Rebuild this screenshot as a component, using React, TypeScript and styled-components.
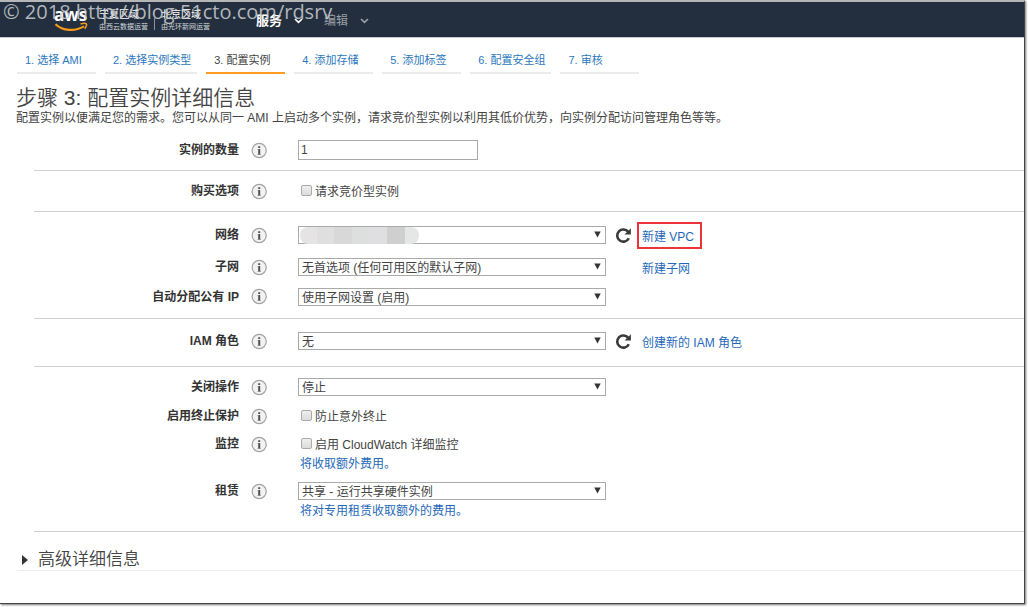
import React from "react";
import styled, { createGlobalStyle } from "styled-components";

const sans = `"Liberation Sans", "Noto Sans CJK SC", sans-serif`;

const GlobalStyle = createGlobalStyle`
  *, *::before, *::after { box-sizing: border-box; }
  body {
    margin: 0;
    background: #fff;
    color: #444;
    font: 12px/16px ${sans};
  }
  button, input, select { font: inherit; color: inherit; margin: 0; }
  a { text-decoration: none; }
`;

const Window = styled.div`
  position: relative;
  min-height: calc(100vh - 3px);
  margin: 0 3px 3px 0;
  border-top: 2px solid #b4b6b8;
  border-right: 1px solid #444;
  border-bottom: 1px solid #444;
  box-shadow: 1px 1px 2px #777;
`;

const TopBar = styled.header`
  display: flex;
  align-items: flex-start;
  height: 36px;
  padding: 5px 0 0 54px;
  background: #232f3e;
  border-bottom: 1px solid #c5cad0;
  color: #fff;
`;

const Logo = styled.a`
  display: flex;
  flex-direction: column;
  width: 35px;
  color: #fff;
  font: 700 17px/15px "Open Sans", sans-serif;

  svg { display: block; }
`;

const Region = styled.div`
  display: flex;
  flex-direction: column;
  gap: 3px;
  margin: 3px 0 0 10px;
  font-size: 10px;
  line-height: 10px;

  small { font-size: 7px; line-height: 8px; color: #d5d8dc; }
`;

const RegionDivider = styled.span`
  width: 1px;
  height: 12px;
  margin: 11px -4px 0 6px;
  background: #8b929b;
`;

const Menus = styled.nav`
  display: flex;
  gap: 21px;
  margin: 5px 0 0 46px;
`;

const MenuButton = styled.button<{ $muted?: boolean }>`
  display: flex;
  align-items: center;
  gap: 12px;
  padding: 0;
  border: 0;
  background: none;
  color: ${(p) => (p.$muted ? "#999fa6" : "#fff")};
  font-size: ${(p) => (p.$muted ? 12 : 13)}px;
  font-weight: ${(p) => (p.$muted ? 400 : 700)};
  line-height: 18px;
`;

const Watermark = styled.div`
  position: absolute;
  top: 0;
  left: 3px;
  color: rgba(205, 208, 212, 0.85);
  font: 20px/20px "Open Sans", sans-serif;
  white-space: nowrap;
  pointer-events: none;
`;

const Steps = styled.nav`
  display: flex;
  gap: 9px;
  padding: 12px 17px 0;
`;

const Step = styled.a<{ $active?: boolean }>`
  min-width: 79px;
  height: 24px;
  padding: 2px 6px 0 8px;
  border-bottom: 2px solid ${(p) => (p.$active ? "#ff9d22" : "#ebebeb")};
  color: ${(p) => (p.$active ? "#444" : "#2b78bd")};
  font-size: 11px;
  white-space: nowrap;
`;

const Intro = styled.div`
  padding: 12px 16px 4px;

  h1 { margin: 0; font-size: 21px; font-weight: 350; line-height: 24px; }
  p { margin: 0; }
`;

const Section = styled.section<{ $top?: number; $bottom?: number }>`
  margin-left: 34px;
  padding: ${(p) => p.$top ?? 0}px 0 ${(p) => p.$bottom ?? 0}px;
  border-bottom: 1px solid #d0d0d0;
`;

const RowGrid = styled.div<{ $height: number }>`
  display: grid;
  grid-template-columns: 205px 35px 1fr;
  grid-template-rows: ${(p) => p.$height}px;
  column-gap: 12px;
  align-items: center;
`;

const RowLabel = styled.label`
  color: #333;
  font-weight: 700;
  text-align: right;
`;

const InfoButton = styled.button`
  display: block;
  width: 17px;
  padding: 0;
  border: 0;
  background: none;

  svg { display: block; }
`;

const Controls = styled.div`
  display: flex;
  align-items: center;
  gap: 9px;
`;

const Hint = styled.p`
  grid-column: 3;
  margin: 0 0 7px;
  padding-left: 2px;
  color: #1f69b8;
  line-height: 12px;
`;

const TextInput = styled.input`
  width: 180px;
  height: 20px;
  padding: 0 2px;
  border: 1px solid #aaa;
  background: #fff;
`;

const SelectBox = styled.div`
  position: relative;
  width: 308px;
  height: 18px;

  select {
    display: block;
    width: 100%;
    height: 100%;
    padding: 2px 20px 0 3px;
    border: 1px solid #aaa;
    border-radius: 0;
    background: #fff;
    line-height: 15px;
    appearance: none;
  }

  > svg { position: absolute; top: 5px; right: 5px; pointer-events: none; }
`;

const Redaction = styled.span`
  position: absolute;
  top: 1px;
  left: 2px;
  width: 119px;
  height: 17px;
  border-radius: 8px;
  background: linear-gradient(
    90deg,
    #e6e3e4 0 17px, #dfdfdf 17px 34px, #d8d8d9 34px 52px, #dcdfde 52px 69px,
    #dfdfe1 69px 87px, #cfcfd0 87px 105px, #e4e7e5 105px
  );
`;

const RefreshSlot = styled.span`
  width: 17px;
  height: 17px;
`;

const RefreshButton = styled.button`
  display: block;
  width: 17px;
  height: 17px;
  padding: 0;
  border: 0;
  background: none;

  svg { display: block; }
`;

const ActionLink = styled.a<{ $marked?: boolean }>`
  padding: 3px 4px 0 1px;
  color: #1f69b8;
  outline: ${(p) => (p.$marked ? "2px solid #ee3338" : "none")};
  outline-offset: 2px;
`;

const Check = styled.label`
  display: flex;
  align-items: center;
  gap: 3px;
  padding-left: 3px;

  input {
    width: 11px;
    height: 11px;
    margin-bottom: 2px;
    border: 1px solid #aaa;
    border-radius: 2px;
    background: linear-gradient(#eee, #dcdcdc);
    appearance: none;
  }
  span { padding-top: 2px; }
`;

const Advanced = styled.div`
  margin-left: 17px;
  padding-top: 18px;
  border-bottom: 1px solid #ececec;

  button {
    display: flex;
    align-items: center;
    gap: 10px;
    padding: 0 0 0 5px;
    border: 0;
    background: none;
    font-size: 17px;
    font-weight: 350;
    line-height: 20px;
  }
`;

const Smile = () => (
  <svg width="35" height="10" viewBox="0 0 35 10" fill="none" stroke="#f79a1c" aria-hidden="true">
    <path d="M1.5 2.2C9 9.2 21 9.6 30 4.4" strokeWidth="2.2" />
    <path d="M26.5 2.1C29 1.3 31.5 1.2 32.3 1.9C32.9 2.6 32 5 30.6 6.8" strokeWidth="1.6" />
  </svg>
);

const Chevron = () => (
  <svg width="9" height="6" viewBox="0 0 9 6" fill="none" stroke="currentColor" strokeWidth="1.7" aria-hidden="true">
    <path d="M1 1L4.5 4.3L8 1" />
  </svg>
);

const Info = ({ about }: { about: string }) => (
  <InfoButton type="button" aria-label={about}>
    <svg width="17" height="17" viewBox="0 0 17 17" aria-hidden="true">
      <circle cx="8.2" cy="8.5" r="7.1" fill="#f2f2f2" stroke="#a3a3a3" strokeWidth="1.2" />
      <path d="M7.2 4.2h2v1.8h-2zM7.2 7h2v5.8h-2z" fill="#505050" />
      <path d="M6.5 7h1v.8h-1zM6.5 12h3.4v.8H6.5z" fill="#8a8a8a" />
    </svg>
  </InfoButton>
);

const Refresh = ({ about }: { about: string }) => (
  <RefreshButton type="button" aria-label={about}>
    <svg width="17" height="17" viewBox="0 0 17 17" aria-hidden="true">
      <path d="M13.2 4.9A6.1 6.1 0 1 0 13.8 11.2" fill="none" stroke="#3a3a3a" strokeWidth="2.6" />
      <path d="M15.9 1.3V7.6H9.6z" fill="#3a3a3a" />
    </svg>
  </RefreshButton>
);

type RowProps = {
  id: string;
  label: string;
  height: number;
  hint?: string;
  children: React.ReactNode;
};

const Row = ({ id, label, height, hint, children }: RowProps) => (
  <RowGrid $height={height}>
    <RowLabel htmlFor={id}>{label}</RowLabel>
    <Info about={label} />
    <Controls>{children}</Controls>
    {hint && <Hint>{hint}</Hint>}
  </RowGrid>
);

const Select = ({ id, value, redacted }: { id: string; value: string; redacted?: boolean }) => (
  <SelectBox>
    <select id={id} defaultValue={value}>
      <option value={value}>{value}</option>
    </select>
    {redacted && <Redaction />}
    <svg width="7" height="7" viewBox="0 0 7 7" aria-hidden="true">
      <path d="M0.3 0.6H6.7L3.5 6.4z" fill="#333" />
    </svg>
  </SelectBox>
);

const Checkbox = ({ id, text }: { id: string; text: string }) => (
  <Check>
    <input id={id} type="checkbox" />
    <span>{text}</span>
  </Check>
);

const steps = ["1. 选择 AMI", "2. 选择实例类型", "3. 配置实例", "4. 添加存储", "5. 添加标签", "6. 配置安全组", "7. 审核"];

export default function App() {
  return (
    <>
      <GlobalStyle />
      <Window>
        <TopBar>
          <Logo href="#">
            aws
            <Smile />
          </Logo>
          <Region>
            宁夏区域
            <small>由西云数据运营</small>
          </Region>
          <RegionDivider />
          <Region>
            北京区域
            <small>由光环新网运营</small>
          </Region>
          <Menus>
            <MenuButton type="button">
              服务 <Chevron />
            </MenuButton>
            <MenuButton type="button" $muted>
              编辑 <Chevron />
            </MenuButton>
          </Menus>
        </TopBar>
        <Watermark>© 2018 http://blog.51cto.com/rdsrv</Watermark>

        <Steps>
          {steps.map((step, i) => (
            <Step key={step} href="#" $active={i === 2} aria-current={i === 2 ? "step" : undefined}>
              {step}
            </Step>
          ))}
        </Steps>

        <main>
          <Intro>
            <h1>步骤 3: 配置实例详细信息</h1>
            <p>
              配置实例以便满足您的需求。您可以从同一 AMI
              上启动多个实例，请求竞价型实例以利用其低价优势，向实例分配访问管理角色等等。
            </p>
          </Intro>

          <Section>
            <Row id="count" label="实例的数量" height={40}>
              <TextInput id="count" defaultValue="1" />
            </Row>
          </Section>

          <Section>
            <Row id="spot" label="购买选项" height={40}>
              <Checkbox id="spot" text="请求竞价型实例" />
            </Row>
          </Section>

          <Section $top={7} $bottom={8}>
            <Row id="network" label="网络" height={32}>
              <Select id="network" value="" redacted />
              <Refresh about="刷新网络" />
              <ActionLink href="#" $marked>新建 VPC</ActionLink>
            </Row>
            <Row id="subnet" label="子网" height={32}>
              <Select id="subnet" value="无首选项 (任何可用区的默认子网)" />
              <RefreshSlot />
              <ActionLink href="#">新建子网</ActionLink>
            </Row>
            <Row id="public-ip" label="自动分配公有 IP" height={27}>
              <Select id="public-ip" value="使用子网设置 (启用)" />
            </Row>
          </Section>

          <Section $bottom={3}>
            <Row id="iam" label="IAM 角色" height={44}>
              <Select id="iam" value="无" />
              <Refresh about="刷新角色" />
              <ActionLink href="#">创建新的 IAM 角色</ActionLink>
            </Row>
          </Section>

          <Section $top={5} $bottom={7}>
            <Row id="shutdown" label="关闭操作" height={30}>
              <Select id="shutdown" value="停止" />
            </Row>
            <Row id="protect" label="启用终止保护" height={28}>
              <Checkbox id="protect" text="防止意外终止" />
            </Row>
            <Row id="monitor" label="监控" height={28} hint="将收取额外费用。">
              <Checkbox id="monitor" text="启用 CloudWatch 详细监控" />
            </Row>
            <Row id="tenancy" label="租赁" height={28} hint="将对专用租赁收取额外的费用。">
              <Select id="tenancy" value="共享 - 运行共享硬件实例" />
            </Row>
          </Section>

          <Advanced>
            <button type="button" aria-expanded="false">
              <svg width="6" height="10" viewBox="0 0 6 10" aria-hidden="true">
                <path d="M0 0L6 5L0 10z" fill="#333" />
              </svg>
              高级详细信息
            </button>
          </Advanced>
        </main>
      </Window>
    </>
  );
}
